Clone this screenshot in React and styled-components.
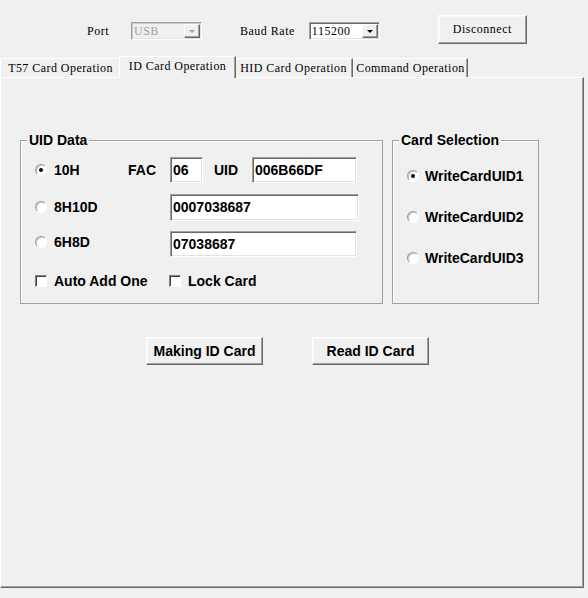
import React from "react";
import styled, { createGlobalStyle } from "styled-components";

const serif = `"Liberation Serif", "DejaVu Serif", serif`;
const sans = `"Liberation Sans", Arial, sans-serif`;

const GlobalStyle = createGlobalStyle`
  html, body {
    margin: 0;
    padding: 0;
    background: #f0f0f0;
  }
  body {
    font-family: ${sans};
    color: #000;
  }
`;

const Window = styled.div`
  width: 588px;
  height: 598px;
  background: #f0f0f0;
  overflow: hidden;
`;

/* ---- top toolbar ---- */

const TopBar = styled.div`
  display: flex;
  align-items: flex-start;
  padding: 15px 0 0 87px;
  height: 29px;
`;

const SmallLabel = styled.span`
  font-family: ${serif};
  font-size: 12px;
  letter-spacing: 0.5px;
  line-height: 18px;
  margin-top: 7px;
  margin-left: ${({ $ml }) => $ml || 0}px;
  white-space: nowrap;
`;

const Combo = styled.div`
  display: flex;
  align-items: center;
  box-sizing: border-box;
  width: ${({ $w }) => $w}px;
  height: 18px;
  margin-top: 7px;
  margin-left: ${({ $ml }) => $ml || 0}px;
  padding: 0 1px 0 2px;
  background: ${({ $disabled }) => ($disabled ? "#f0f0f0" : "#fff")};
  border: 1px solid;
  border-color: #a0a0a0 #fff #fff #a0a0a0;
  box-shadow: ${({ $disabled }) =>
    $disabled
      ? "inset 1px 1px #c8c8c8, inset -1px -1px #e3e3e3"
      : "inset 1px 1px #696969, inset -1px -1px #e3e3e3"};
`;

const ComboValue = styled.span`
  flex: 1;
  font-family: ${serif};
  font-size: 12px;
  letter-spacing: 0.5px;
  line-height: 14px;
  color: ${({ $disabled }) => ($disabled ? "#a0a0a0" : "#000")};
`;

const ArrowBox = styled.div`
  display: flex;
  align-items: center;
  justify-content: center;
  box-sizing: border-box;
  width: 16px;
  height: 14px;
  background: #f0f0f0;
  border: 1px solid;
  border-color: #fff #696969 #696969 #fff;
  box-shadow: inset -1px -1px #a0a0a0;

  &::after {
    content: "";
    width: 0;
    height: 0;
    border-left: 3px solid transparent;
    border-right: 3px solid transparent;
    border-top: 3px solid ${({ $disabled }) => ($disabled ? "#a0a0a0" : "#000")};
    margin-top: 1px;
  }
`;

const Button = styled.button`
  box-sizing: border-box;
  width: ${({ $w }) => $w}px;
  height: ${({ $h }) => $h}px;
  margin: 0;
  margin-left: ${({ $ml }) => $ml || 0}px;
  padding: 0;
  background: #f0f0f0;
  border: 1px solid;
  border-color: #fff #696969 #696969 #fff;
  box-shadow: inset -1px -1px #a0a0a0, inset 1px 1px #f8f8f8;
  color: #000;
  font-family: ${({ $small }) => ($small ? serif : sans)};
  font-size: ${({ $small }) => ($small ? "12px" : "14px")};
  font-weight: ${({ $small }) => ($small ? "normal" : "bold")};
  letter-spacing: ${({ $small }) => ($small ? "0.5px" : "0")};
  cursor: default;
`;

/* ---- tab strip ---- */

const TabStrip = styled.div`
  display: flex;
  align-items: flex-end;
  height: 21px;
  margin-top: 12px;
`;

// the selected tab is drawn 2px wider on each side, over its neighbours' edges
const Tab = styled.div`
  position: relative;
  z-index: ${({ $active }) => ($active ? 1 : 0)};
  box-sizing: border-box;
  width: ${({ $w }) => $w}px;
  height: ${({ $active }) => ($active ? 22 : 19)}px;
  margin: 0 ${({ $active }) => ($active ? -2 : 0)}px
    ${({ $active }) => ($active ? -1 : 0)}px;
  padding-bottom: ${({ $active }) => ($active ? 3 : 0)}px;
  display: flex;
  align-items: center;
  justify-content: center;
  background: #f0f0f0;
  border: 1px solid;
  border-bottom: none;
  border-color: #fff #696969 transparent #fff;
  box-shadow: inset -1px 0 #a0a0a0;
  color: #000;
  font-family: ${serif};
  font-size: 12px;
  letter-spacing: 0.45px;
  white-space: nowrap;
`;

const Panel = styled.div`
  box-sizing: border-box;
  width: 584px;
  height: 511px;
  padding-top: 54px;
  border: 1px solid;
  border-color: #fff #696969 #696969 #fff;
  box-shadow: inset -1px -1px #a0a0a0;
`;

/* ---- group boxes ---- */

const GroupRow = styled.div`
  display: flex;
  gap: 9px;
  padding-left: 19px;
`;

const Group = styled.fieldset`
  box-sizing: border-box;
  width: ${({ $w }) => $w}px;
  height: 172px;
  margin: 0;
  padding: ${({ $pt }) => $pt}px 0 0 14px;
  border: 1px solid #a0a0a0;
  box-shadow: inset 1px 1px #fff;
  display: flex;
  flex-direction: column;
  gap: ${({ $gap }) => $gap}px;
`;

const Legend = styled.legend`
  margin-left: -8px;
  padding: 0 2px;
  font-size: 14px;
  font-weight: bold;
  line-height: 16px;
`;

const Row = styled.div`
  display: flex;
  align-items: center;
  height: ${({ $h }) => $h || 26}px;
  margin-top: ${({ $mt }) => $mt || 0}px;
`;

const Choice = styled.label`
  display: flex;
  align-items: center;
  gap: ${({ $gap }) => $gap || 7}px;
  width: ${({ $w }) => ($w ? `${$w}px` : "auto")};
  margin-top: ${({ $lift }) => ($lift ? -$lift : 0)}px;
  font-size: 14px;
  font-weight: bold;
  white-space: nowrap;
`;

const RadioDot = styled.span`
  box-sizing: border-box;
  width: 12px;
  height: 12px;
  border-radius: 50%;
  border: 1px solid;
  border-color: #9a9a9a #fff #fff #9a9a9a;
  background: #fff;
  box-shadow: inset 1px 1px #c8c8c8;
  display: flex;
  align-items: center;
  justify-content: center;

  &::after {
    content: "";
    width: 4px;
    height: 4px;
    border-radius: 50%;
    background: ${({ $checked }) => ($checked ? "#000" : "transparent")};
  }
`;

const CheckBox = styled.span`
  box-sizing: border-box;
  width: 12px;
  height: 12px;
  background: #fff;
  border: 1px solid;
  border-color: #808080 #fff #fff #808080;
  box-shadow: inset 1px 1px #404040;
`;

const FieldLabel = styled.span`
  width: ${({ $w }) => $w}px;
  margin-left: ${({ $ml }) => $ml || 0}px;
  font-size: 14px;
  font-weight: bold;
`;

const TextBox = styled.div`
  box-sizing: border-box;
  width: ${({ $w }) => $w}px;
  height: ${({ $h }) => $h || 26}px;
  padding: 0 2px;
  display: flex;
  align-items: center;
  background: #fff;
  border: 1px solid;
  border-color: #a0a0a0 #fff #fff #a0a0a0;
  box-shadow: inset 1px 1px #696969, inset -1px -1px #e3e3e3;
  font-size: 14px;
  font-weight: bold;
`;

const ButtonRow = styled.div`
  display: flex;
  padding: 33px 0 0 145px;
`;

const Radio = ({ checked, label, w, gap, lift }) => (
  <Choice $w={w} $gap={gap} $lift={lift}>
    <RadioDot $checked={checked} />
    {label}
  </Choice>
);

const Check = ({ label, w }) => (
  <Choice $w={w}>
    <CheckBox />
    {label}
  </Choice>
);

const tabs = [
  { label: "T57 Card Operation", w: 121 },
  { label: "ID Card Operation", w: 117, active: true },
  { label: "HID Card Operation", w: 119 },
  { label: "Command Operation", w: 115 },
];

export default function App() {
  return (
    <Window>
      <GlobalStyle />
      <TopBar>
        <SmallLabel>Port</SmallLabel>
        <Combo $w={71} $ml={22} $disabled>
          <ComboValue $disabled>USB</ComboValue>
          <ArrowBox $disabled />
        </Combo>
        <SmallLabel $ml={38}>Baud Rate</SmallLabel>
        <Combo $w={71} $ml={14}>
          <ComboValue>115200</ComboValue>
          <ArrowBox />
        </Combo>
        <Button $small $w={89} $h={29} $ml={58}>
          Disconnect
        </Button>
      </TopBar>

      <TabStrip>
        {tabs.map((t) => (
          <Tab key={t.label} $w={t.w} $active={t.active}>
            {t.label}
          </Tab>
        ))}
      </TabStrip>

      <Panel>
        <GroupRow>
          <Group $w={363} $pt={9} $gap={11}>
            <Legend>UID Data</Legend>
            <Row>
              <Radio checked label="10H" w={93} />
              <FieldLabel $w={42}>FAC</FieldLabel>
              <TextBox $w={33}>06</TextBox>
              <FieldLabel $w={38} $ml={11}>
                UID
              </FieldLabel>
              <TextBox $w={105}>006B66DF</TextBox>
            </Row>
            <Row>
              <Radio label="8H10D" w={135} />
              <TextBox $w={189} $h={27}>0007038687</TextBox>
            </Row>
            <Row>
              <Radio label="6H8D" w={135} lift={5} />
              <TextBox $w={187}>07038687</TextBox>
            </Row>
            <Row $h={16} $mt={5}>
              <Check label="Auto Add One" w={134} />
              <Check label="Lock Card" />
            </Row>
          </Group>

          <Group $w={147} $pt={20} $gap={25}>
            <Legend>Card Selection</Legend>
            <Row $h={16}>
              <Radio checked label="WriteCardUID1" gap={6} />
            </Row>
            <Row $h={16}>
              <Radio label="WriteCardUID2" gap={6} />
            </Row>
            <Row $h={16}>
              <Radio label="WriteCardUID3" gap={6} />
            </Row>
          </Group>
        </GroupRow>

        <ButtonRow>
          <Button $w={117} $h={28}>
            Making ID Card
          </Button>
          <Button $w={117} $h={28} $ml={49}>
            Read ID Card
          </Button>
        </ButtonRow>
      </Panel>
    </Window>
  );
}
